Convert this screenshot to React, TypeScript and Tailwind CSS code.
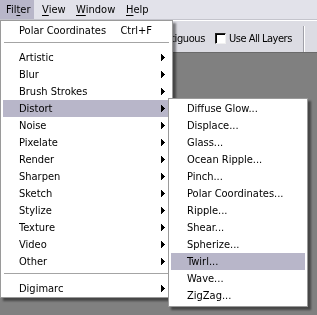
import { ReactNode } from "react";

const FONT =
  "font-['DejaVu_Sans_Condensed','Liberation_Sans',sans-serif] text-[11px] leading-none text-black antialiased";

const categories = [
  "Artistic",
  "Blur",
  "Brush Strokes",
  "Distort",
  "Noise",
  "Pixelate",
  "Render",
  "Sharpen",
  "Sketch",
  "Stylize",
  "Texture",
  "Video",
  "Other",
];

const distortItems = [
  "Diffuse Glow...",
  "Displace...",
  "Glass...",
  "Ocean Ripple...",
  "Pinch...",
  "Polar Coordinates...",
  "Ripple...",
  "Shear...",
  "Spherize...",
  "Twirl...",
  "Wave...",
  "ZigZag...",
];

function Arrow() {
  return (
    <svg width="4" height="7" viewBox="0 0 4 7" shapeRendering="crispEdges">
      <rect x="0" y="0" width="1" height="7" fill="#000" />
      <rect x="1" y="1" width="1" height="5" fill="#000" />
      <rect x="2" y="2" width="1" height="3" fill="#000" />
      <rect x="3" y="3" width="1" height="1" fill="#000" />
    </svg>
  );
}

function Row({
  label,
  active,
  right,
}: {
  label: string;
  active?: boolean;
  right?: ReactNode;
}) {
  return (
    <div
      className={`flex h-[17px] items-center justify-between pl-[16px] ${
        active ? "bg-[#b8b6c9]" : ""
      }`}
    >
      <span>{label}</span>
      {right}
    </div>
  );
}

function Separator() {
  return (
    <div className="h-[10px] px-[1px] pt-[3px]">
      <div className="h-[1px] bg-[#a4a4a4]" />
    </div>
  );
}

function MenuBarItem({
  children,
  active,
  className,
}: {
  children: ReactNode;
  active?: boolean;
  className: string;
}) {
  return (
    <div
      className={`flex h-full items-center pl-[6px] ${className} ${
        active ? "bg-[#b8b6c9]" : ""
      }`}
    >
      {children}
    </div>
  );
}

export default function App() {
  return (
    <div
      className={`relative h-[315px] w-[317px] overflow-hidden bg-[#808080] will-change-transform ${FONT}`}
    >
      {/* Menu bar */}
      <div className="flex h-[19px] items-stretch bg-[#e2e2ea]">
        <MenuBarItem active className="w-[34px]">
          Fil<span className="underline underline-offset-2">t</span>er
        </MenuBarItem>
        <MenuBarItem className="ml-[2px] w-[34px]">
          <span className="underline underline-offset-2">V</span>iew
        </MenuBarItem>
        <MenuBarItem className="w-[50px]">
          <span className="underline underline-offset-2">W</span>indow
        </MenuBarItem>
        <MenuBarItem className="w-[40px]">
          <span className="underline underline-offset-2">H</span>elp
        </MenuBarItem>
      </div>
      <div className="h-[1px] bg-[#c4c4cc]" />

      {/* Options bar */}
      <div className="flex h-[33px] items-center border-t border-b border-t-white border-b-[#6a6a6a] bg-[#dcdce3] pt-[4px]">
        <span className="ml-[120px] w-[85px] text-right tracking-[-0.4px]">Contiguous</span>
        <div className="ml-[10px] h-[11px] w-[11px] border border-t-[#202020] border-l-[#202020] border-r-[#f0f0f0] border-b-[#f0f0f0] bg-white shadow-[inset_1px_1px_0_#000]" />
        <span className="ml-[3px] tracking-[-0.5px]">Use All Layers</span>
        <div className="ml-auto mr-[12px] flex h-[26px] self-end">
          <div className="w-[1px] bg-[#a0a0a8]" />
          <div className="w-[1px] bg-white" />
        </div>
      </div>

      {/* Filter menu */}
      <div className="absolute left-0 top-[20px] w-[173px] border border-[#9a9a9a] bg-white px-[2px] pt-[1px] shadow-[3px_3px_2px_rgba(0,0,0,0.45)]">
        <Row label="Polar Coordinates" right={<span className="pr-[18px]">Ctrl+F</span>} />
        <Separator />
        {categories.map((c) => (
          <Row
            key={c}
            label={c}
            active={c === "Distort"}
            right={
              <span className="pr-[5px]">
                <Arrow />
              </span>
            }
          />
        ))}
        <Separator />
        <Row
          label="Digimarc"
          right={
            <span className="pr-[5px]">
              <Arrow />
            </span>
          }
        />
      </div>

      {/* Distort submenu */}
      <div className="absolute left-[168px] top-[98px] w-[140px] border border-[#9a9a9a] bg-white px-[2px] pt-[1px] pb-[2px] shadow-[3px_3px_2px_rgba(0,0,0,0.45)]">
        {distortItems.map((d) => (
          <Row key={d} label={d} active={d === "Twirl..."} />
        ))}
      </div>
    </div>
  );
}
